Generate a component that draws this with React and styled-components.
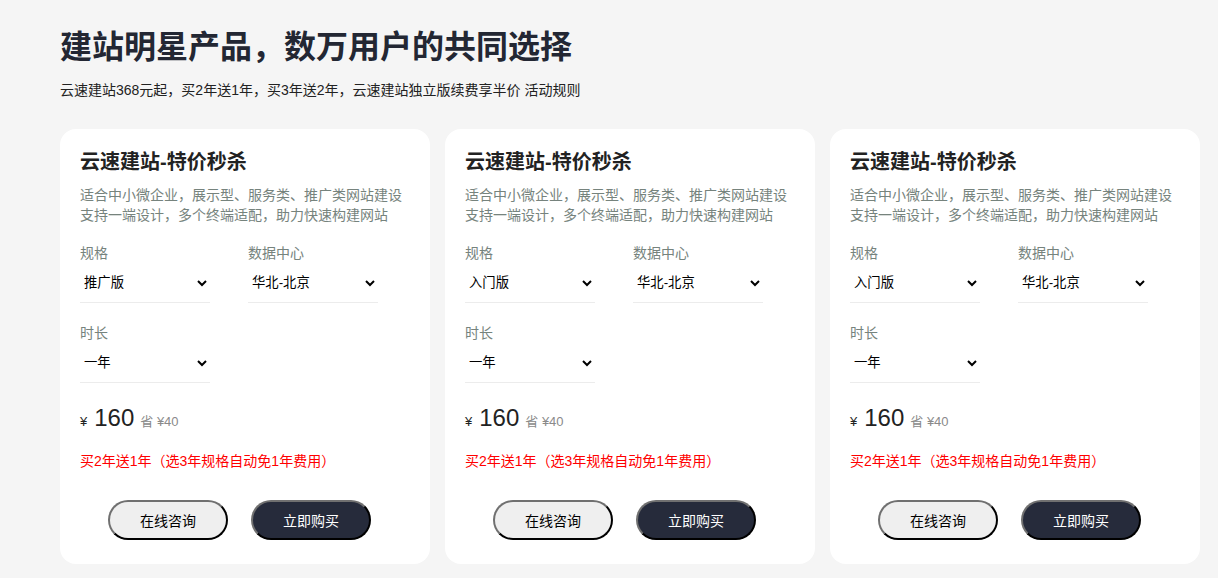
import React from "react";
import styled, { createGlobalStyle } from "styled-components";

const Global = createGlobalStyle`
  html, body { margin: 0; padding: 0; background: #f5f5f5; }
  body { font-family: "Liberation Sans", Arial, "Noto Sans CJK SC", sans-serif; color: #222; }
`;

const Page = styled.div`
  padding: 26px 18px 14px 60px;
`;

const Heading = styled.h1`
  margin: 0;
  font-size: 32px;
  line-height: 42px;
  font-weight: 700;
  color: #232733;
  letter-spacing: 0;
`;

const Sub = styled.p`
  margin: 12px 0 0;
  font-size: 14px;
  line-height: 20px;
  color: #222;
`;

const Cards = styled.div`
  margin-top: 29px;
  display: grid;
  grid-template-columns: repeat(3, 370px);
  gap: 15px;
`;

const Card = styled.div`
  background: #fff;
  border-radius: 16px;
  padding: 20px 20px 24px;
  height: 435px;
  box-sizing: border-box;
`;

const CardTitle = styled.h2`
  margin: 0;
  font-size: 20px;
  line-height: 26px;
  font-weight: 700;
  color: #222;
`;

const Desc = styled.p`
  margin: 10px 0 0;
  font-size: 14px;
  line-height: 20px;
  color: #76837d;
`;

const FieldGrid = styled.div`
  display: grid;
  grid-template-columns: 130px 130px;
  column-gap: 38px;
  margin-top: ${(p) => p.$mt || 18}px;
`;

const Field = styled.div`
  display: flex;
  flex-direction: column;
`;

const Label = styled.span`
  font-size: 14px;
  line-height: 20px;
  color: #76837d;
`;

const Select = styled.select`
  width: 130px;
  height: 40px;
  box-sizing: border-box;
  border: none;
  border-bottom: 1px solid #ececec;
  background: #fff;
  font-family: "Liberation Sans", Arial, "Noto Sans CJK SC", sans-serif;
  font-size: 13.33px;
  color: #000;
  padding: 0 4px 0 0;
  outline: none;
`;

const PriceRow = styled.div`
  margin-top: 20px;
  display: flex;
  align-items: baseline;
  height: 30px;
  line-height: 30px;
`;

const Yen = styled.span`
  font-size: 13px;
  color: #222;
  margin-right: 7px;
`;

const Amount = styled.span`
  font-size: 24px;
  color: #222;
  margin-right: 6px;
`;

const Save = styled.span`
  font-size: 13px;
  color: #8a8a8a;
`;

const Promo = styled.p`
  margin: 18px 0 0;
  font-size: 14px;
  line-height: 20px;
  color: #ff0000;
`;

const Actions = styled.div`
  margin-top: 29px;
  padding-left: 28px;
  display: flex;
  gap: 23px;
`;

const Btn = styled.button`
  width: 120px;
  height: 40px;
  border-radius: 20px;
  border: 2px solid;
  border-color: #707070 #000 #000 #707070;
  background: ${(p) => (p.$dark ? "#262b3b" : "#efefef")};
  color: ${(p) => (p.$dark ? "#fff" : "#000")};
  font-family: "Liberation Sans", Arial, "Noto Sans CJK SC", sans-serif;
  font-size: 14px;
  cursor: pointer;
`;

const products = [
  { spec: "推广版" },
  { spec: "入门版" },
  { spec: "入门版" },
];

function ProductCard({ spec }) {
  return (
    <Card>
      <CardTitle>云速建站-特价秒杀</CardTitle>
      <Desc>
        适合中小微企业，展示型、服务类、推广类网站建设
        <br />
        支持一端设计，多个终端适配，助力快速构建网站
      </Desc>
      <FieldGrid>
        <Field>
          <Label>规格</Label>
          <Select defaultValue={spec}>
            <option>入门版</option>
            <option>推广版</option>
            <option>标准版</option>
          </Select>
        </Field>
        <Field>
          <Label>数据中心</Label>
          <Select defaultValue="华北-北京">
            <option>华北-北京</option>
            <option>华东-上海</option>
          </Select>
        </Field>
      </FieldGrid>
      <FieldGrid $mt={20}>
        <Field>
          <Label>时长</Label>
          <Select defaultValue="一年">
            <option>一年</option>
            <option>二年</option>
            <option>三年</option>
          </Select>
        </Field>
      </FieldGrid>
      <PriceRow>
        <Yen>¥</Yen>
        <Amount>160</Amount>
        <Save>省 ¥40</Save>
      </PriceRow>
      <Promo>买2年送1年（选3年规格自动免1年费用）</Promo>
      <Actions>
        <Btn>在线咨询</Btn>
        <Btn $dark>立即购买</Btn>
      </Actions>
    </Card>
  );
}

export default function App() {
  return (
    <>
      <Global />
      <Page>
        <Heading>建站明星产品，数万用户的共同选择</Heading>
        <Sub>云速建站368元起，买2年送1年，买3年送2年，云速建站独立版续费享半价 活动规则</Sub>
        <Cards>
          {products.map((p, i) => (
            <ProductCard key={i} spec={p.spec} />
          ))}
        </Cards>
      </Page>
    </>
  );
}
